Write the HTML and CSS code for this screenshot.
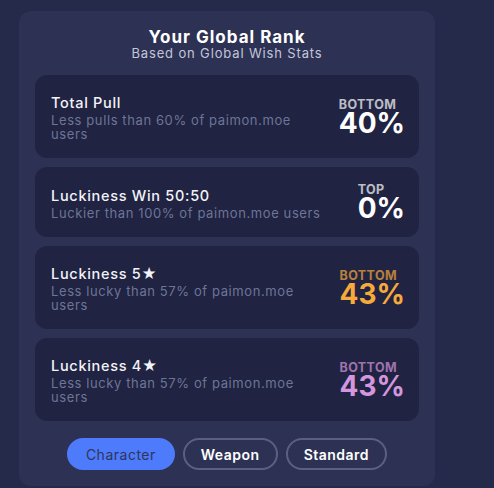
FILE: index.html
```html
<!DOCTYPE html>
<html>
<head>
<meta charset="utf-8">
<link rel="stylesheet" href="styles.css">
</head>
<body>
<div class="panel">
  <div class="head">
    <div class="title">Your Global Rank</div>
    <div class="sub">Based on Global Wish Stats</div>
  </div>
  <div class="cards">
    <div class="card">
      <div class="info">
        <div class="name">Total Pull</div>
        <div class="desc">Less pulls than 60% of paimon.moe users</div>
      </div>
      <div class="rank">
        <div class="label">BOTTOM</div>
        <div class="pct">40%</div>
      </div>
    </div>
    <div class="card">
      <div class="info">
        <div class="name">Luckiness Win 50:50</div>
        <div class="desc">Luckier than 100% of paimon.moe users</div>
      </div>
      <div class="rank">
        <div class="label">TOP</div>
        <div class="pct">0%</div>
      </div>
    </div>
    <div class="card">
      <div class="info">
        <div class="name">Luckiness 5★</div>
        <div class="desc">Less lucky than 57% of paimon.moe users</div>
      </div>
      <div class="rank gold">
        <div class="label">BOTTOM</div>
        <div class="pct">43%</div>
      </div>
    </div>
    <div class="card">
      <div class="info">
        <div class="name">Luckiness 4★</div>
        <div class="desc">Less lucky than 57% of paimon.moe users</div>
      </div>
      <div class="rank purple">
        <div class="label">BOTTOM</div>
        <div class="pct">43%</div>
      </div>
    </div>
  </div>
  <div class="tabs">
    <button class="tab active">Character</button>
    <button class="tab">Weapon</button>
    <button class="tab">Standard</button>
  </div>
</div>
</body>
</html>
```
FILE: styles.css
```css
html, body {
  margin: 0;
  background: #25294a;
  height: 100%;
}
body {
  padding: 11px 0 0 19px;
  font-family: "Inter", "Noto Sans", sans-serif;
  box-sizing: border-box;
  overflow: hidden;
}
.panel {
  width: 416px;
  box-sizing: border-box;
  background: #2d3154;
  border-radius: 12px;
  padding: 16px 16px 16px;
}
.head {
  text-align: center;
  margin-bottom: 16px;
}
.title {
  color: #ffffff;
  font-size: 17px;
  font-weight: 700;
  line-height: 20px;
  letter-spacing: 1px;
}
.sub {
  color: #c3c6d8;
  font-size: 13px;
  line-height: 12px;
  letter-spacing: 0.85px;
}
.cards {
  display: flex;
  flex-direction: column;
  gap: 9px;
}
.card {
  background: #202341;
  border-radius: 12px;
  padding: 17px 14px 17px 16px;
  display: flex;
  align-items: center;
  gap: 22px;
}
.info {
  flex: 1;
}
.name {
  color: #f2f3f8;
  font-size: 14.5px;
  font-weight: 500;
  line-height: 21px;
  letter-spacing: 0.7px;
}
.desc {
  color: #6d7598;
  font-size: 13px;
  line-height: 14px;
  letter-spacing: 0.6px;
}
.rank {
  color: #ffffff;
  flex: none;
}
.label {
  font-size: 12.5px;
  font-weight: 700;
  line-height: 12px;
  letter-spacing: 0.4px;
  opacity: 0.7;
  white-space: nowrap;
}
.pct {
  font-size: 28px;
  font-weight: 700;
  line-height: 23px;
  padding-top: 1px;
}
.gold { color: #f6aa3c; }
.purple { color: #d497de; }
.tabs {
  display: flex;
  justify-content: center;
  gap: 8px;
  margin-top: 17px;
}
.tab {
  font-family: inherit;
  height: 32px;
  border-radius: 16px;
  border: 2px solid #5c6080;
  background: transparent;
  color: #ffffff;
  font-size: 14px;
  font-weight: 600;
  letter-spacing: 0.5px;
  padding: 0 16px;
}
.tab.active {
  background: #4e7bfb;
  border-color: #4e7bfb;
  color: #2d355a;
  font-weight: 400;
  padding: 0 17px;
}
```
